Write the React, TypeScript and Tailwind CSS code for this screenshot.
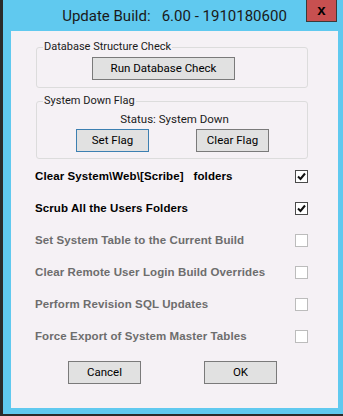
import React from "react";

const ui = "font-['Roboto','Liberation_Sans',sans-serif]";

function WinButton({
  label,
  className = "",
  focused = false,
}: {
  label: string;
  className?: string;
  focused?: boolean;
}) {
  return (
    <button
      className={`h-[23px] bg-[#e1e1e1] border text-[11.5px] leading-none text-black ${
        focused ? "border-[#3c7fb1]" : "border-[#7a7a7a]"
      } ${className}`}
    >
      {label}
    </button>
  );
}

function CheckRow({
  label,
  checked = false,
  enabled = true,
}: {
  label: string;
  checked?: boolean;
  enabled?: boolean;
}) {
  return (
    <div className="h-[32px] flex items-center justify-between pl-[24px] pr-[30px]">
      <span
        className={`font-['Liberation_Sans',sans-serif] font-bold text-[11.5px] tracking-[0.1px] whitespace-pre ${
          enabled ? "text-black" : "text-[#6d6d6d]"
        }`}
      >
        {label}
      </span>
      <span
        className={`w-[13px] h-[13px] border bg-white flex items-center justify-center ${
          enabled ? "border-[#4a4a4a]" : "border-[#bcbcbc]"
        }`}
      >
        {checked && (
          <svg width="9" height="9" viewBox="0 0 9 9">
            <path d="M1 4.5 L3.5 7 L8 1.5" fill="none" stroke="#111" strokeWidth="2" />
          </svg>
        )}
      </span>
    </div>
  );
}

export default function App() {
  return (
    <div
      className={`w-[343px] h-[416px] bg-[#60c9ef] border-l-[3px] border-b-[2px] border-[#2b2b2b] flex flex-col pb-[6px] ${ui}`}
    >
      {/* title bar */}
      <div className="relative h-[31px] shrink-0 flex items-center justify-center pl-[3px]">
        <span className="text-[15px] text-[#1a1a1a] whitespace-pre leading-none mt-[1px]">
          Update Build:   6.00 - 1910180600
        </span>
        <div className="absolute top-0 right-[6px] w-[31px] h-[22px] bg-[#c75050] border border-t-0 border-[#3a3a3a] flex items-center justify-center">
          <span className="font-['Liberation_Sans',sans-serif] font-bold text-[15px] leading-none text-black -mt-[3px]">
            x
          </span>
        </div>
      </div>

      {/* client area */}
      <div className="flex-1 ml-[8px] mr-[5px] bg-[#f5f1f5] flex flex-col">
        <fieldset className="ml-[25px] w-[272px] mt-[8px] border border-[#dcdcdc] rounded-[3px] pb-[7px]">
          <legend className="ml-[6px] px-[1px] text-[11px] leading-[16px] text-[#1a1a1a]">
            Database Structure Check
          </legend>
          <WinButton label="Run Database Check" className="ml-[55px] mt-[2px] w-[143px]" />
        </fieldset>

        <fieldset className="ml-[25px] w-[272px] mt-[5px] border border-[#dcdcdc] rounded-[3px] pb-[6px]">
          <legend className="ml-[6px] px-[1px] text-[11px] leading-[16px] text-[#1a1a1a]">
            System Down Flag
          </legend>
          <div className="mt-[2px] text-[11.5px] leading-[16px] text-center pl-[5px] text-[#1a1a1a]">
            Status: System Down
          </div>
          <div className="flex mt-[2px] ml-[39px] gap-[47px]">
            <WinButton label="Set Flag" focused className="w-[73px]" />
            <WinButton label="Clear Flag" className="w-[73px]" />
          </div>
        </fieldset>

        <div className="flex flex-col mt-[1px]">
          <CheckRow label="Clear System\Web\[Scribe]   folders" checked />
          <CheckRow label="Scrub All the Users Folders" checked />
          <CheckRow label="Set System Table to the Current Build" enabled={false} />
          <CheckRow label="Clear Remote User Login Build Overrides" enabled={false} />
          <CheckRow label="Perform Revision SQL Updates" enabled={false} />
          <CheckRow label="Force Export of System Master Tables" enabled={false} />
        </div>

        <div className="flex ml-[57px] mt-[9px] gap-[63px]">
          <WinButton label="Cancel" className="w-[73px]" />
          <WinButton label="OK" className="w-[73px]" />
        </div>
      </div>
    </div>
  );
}
